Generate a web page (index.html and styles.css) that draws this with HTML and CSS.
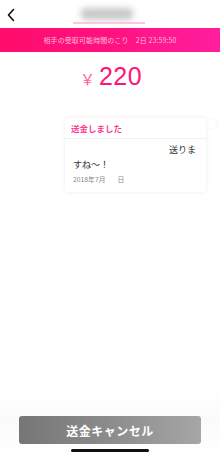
FILE: index.html
```html
<!DOCTYPE html>
<html lang="ja">
<head>
<meta charset="utf-8">
<link rel="stylesheet" href="styles.css">
</head>
<body>
<div class="screen">
  <header class="nav">
    <svg class="back" width="10" height="14" viewBox="0 0 10 14"><path d="M7.5 1.5 L2.5 7 L7.5 12.5" fill="none" stroke="#111" stroke-width="1.6" stroke-linecap="round" stroke-linejoin="round"/></svg>
    <div class="title">
      <div class="blur"></div>
      <div class="underline"></div>
    </div>
  </header>
  <div class="banner">相手の受取可能時間のこり　2日 23:59:50</div>
  <div class="amount"><span class="yen">￥</span><span class="num">220</span></div>
  <div class="cardrow">
    <div class="card">
      <div class="card-head">送金しました</div>
      <div class="card-body">
        <div class="msg-r">送りま</div>
        <div class="msg-l">すね〜！</div>
        <div class="date"><span>2018年7月</span><span class="day">日</span></div>
      </div>
    </div>
    <div class="peek"></div>
  </div>
  <div class="spacer"></div>
  <div class="footer">
    <button class="cancel">送金キャンセル</button>
    <div class="home"></div>
  </div>
</div>
</body>
</html>
```
FILE: styles.css
```css
* { box-sizing: border-box; margin: 0; padding: 0; }
html, body { width: 220px; height: 455px; background: #fff; overflow: hidden; }
body { font-family: "Noto Sans CJK JP", "Noto Sans", sans-serif; color: #333; }
.screen { display: flex; flex-direction: column; height: 455px; }
.nav { height: 28px; display: flex; align-items: flex-start; position: relative; }
.back { margin: 8px 0 0 6px; }
.title { position: absolute; left: 73px; top: 0; width: 73px; height: 28px; }
.blur { position: absolute; left: 8px; top: 8px; width: 52px; height: 12px; background: #c9c9c9; border-radius: 4px; filter: blur(3px); }
.underline { position: absolute; left: 0; top: 22px; width: 72px; height: 2px; background: #ffc6e2; filter: blur(0.5px); }
.banner { height: 24px; background: linear-gradient(90deg, #ff0c6c 0%, #ff1280 50%, #ff1e9e 100%); color: #ffbcd9; font-size: 7px; line-height: 24px; text-align: center; letter-spacing: 0.1px; }
.amount { display: flex; justify-content: center; align-items: baseline; margin-top: 10px; height: 34px; color: #ff1577; padding-left: 2px; }
.yen { font-family: "Noto Sans CJK JP", sans-serif; font-size: 15px; color: #ff5fa0; margin-right: 4px; font-weight: 400; }
.num { font-family: "Liberation Sans", Arial, sans-serif; font-size: 25px; letter-spacing: 0.5px; }
.cardrow { display: flex; margin-top: 22px; padding-left: 65px; align-items: flex-start; }
.card { width: 141px; background: #fff; border-radius: 3px; box-shadow: 0 0 4px rgba(0,0,0,0.08); }
.card-head { height: 21px; line-height: 21px; padding-left: 6px; color: #ff3d93; font-size: 8.5px; font-weight: 700; border-bottom: 1px solid #f1f1f1; }
.card-body { padding: 4px 8px 7px 8px; }
.msg-r { text-align: right; font-size: 9px; color: #333; line-height: 14px; padding-right: 2px; }
.msg-l { font-size: 9px; color: #333; line-height: 14px; margin-top: 1px; }
.date { display: flex; gap: 12px; font-size: 6.8px; color: #888; line-height: 12px; margin-top: 1px; }
.peek { width: 10px; height: 8px; margin-top: 2px; border-radius: 0 3px 3px 0; box-shadow: 1px 0 3px rgba(0,0,0,0.05); }
.spacer { flex: 1; }
.footer { height: 65px; display: flex; flex-direction: column; align-items: center; background: linear-gradient(180deg, rgba(255,255,255,0) 0%, #fafafa 45%, #fff 100%); padding-top: 26px; }
.cancel { width: 182px; height: 28px; border: none; border-radius: 3px; background: linear-gradient(90deg, #767676 0%, #8c8c8c 50%, #a6a6a6 100%); color: #fff; font-family: "Noto Sans CJK JP", sans-serif; font-weight: 700; font-size: 12px; letter-spacing: 0.5px; }
.home { width: 78px; height: 3px; background: #111; border-radius: 2px; margin-top: 5px; }
```
